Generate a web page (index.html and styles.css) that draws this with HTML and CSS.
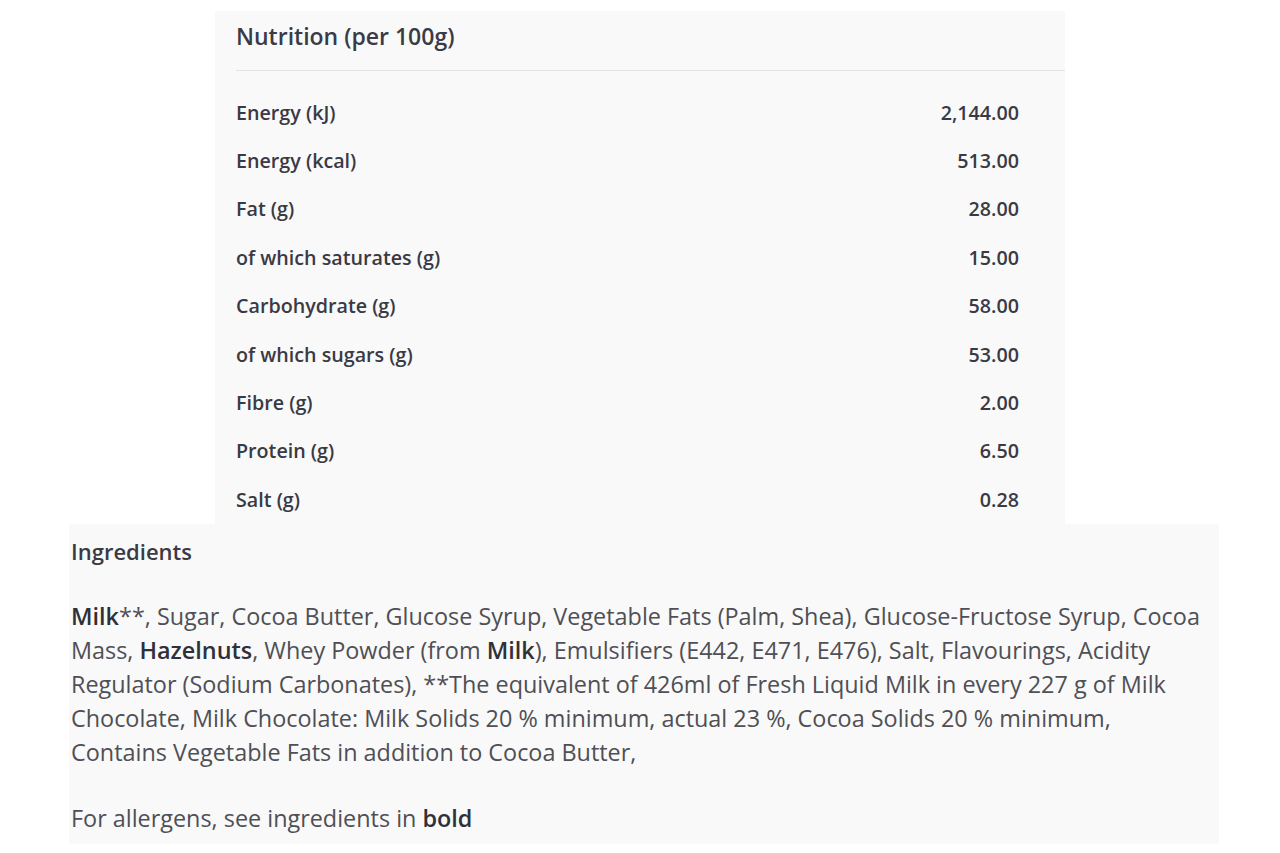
FILE: index.html
```html
<!DOCTYPE html>
<html lang="en">
<head>
<meta charset="utf-8">
<title>Nutrition</title>
<link rel="stylesheet" href="styles.css">
</head>
<body>
<section class="nutrition">
  <h2 class="nutrition-title">Nutrition (per 100g)</h2>
  <table class="nutrition-table">
    <tbody>
      <tr><th>Energy (kJ)</th><td>2,144.00</td></tr>
      <tr><th>Energy (kcal)</th><td>513.00</td></tr>
      <tr><th>Fat (g)</th><td>28.00</td></tr>
      <tr><th>of which saturates (g)</th><td>15.00</td></tr>
      <tr><th>Carbohydrate (g)</th><td>58.00</td></tr>
      <tr><th>of which sugars (g)</th><td>53.00</td></tr>
      <tr><th>Fibre (g)</th><td>2.00</td></tr>
      <tr><th>Protein (g)</th><td>6.50</td></tr>
      <tr><th>Salt (g)</th><td>0.28</td></tr>
    </tbody>
  </table>
</section>
<section class="ingredients">
  <h3 class="ingredients-title">Ingredients</h3>
  <p class="ingredients-text"><b>Milk</b>**, Sugar, Cocoa Butter, Glucose Syrup, Vegetable Fats (Palm, Shea), Glucose-Fructose Syrup, Cocoa Mass, <b>Hazelnuts</b>, Whey Powder (from <b>Milk</b>), Emulsifiers (E442, E471, E476), Salt, Flavourings, Acidity Regulator (Sodium Carbonates), **The equivalent of 426ml of Fresh Liquid Milk in every 227 g of Milk Chocolate, Milk Chocolate: Milk Solids 20 % minimum, actual 23 %, Cocoa Solids 20 % minimum, Contains Vegetable Fats in addition to Cocoa Butter,</p>
  <p class="ingredients-text">For allergens, see ingredients in <b>bold</b></p>
</section>
</body>
</html>
```
FILE: styles.css
```css
html, body {
  margin: 0;
  padding: 0;
  background: #ffffff;
}
body {
  font-family: "Open Sans", "Noto Sans", sans-serif;
  color: #4f4f55;
}
.nutrition {
  margin: 11px 0 0 215px;
  width: 850px;
  background: #f9f9f9;
  padding-left: 21px;
  box-sizing: border-box;
}
.nutrition-title {
  margin: 0;
  height: 60px;
  box-sizing: border-box;
  padding-top: 9px;
  font-size: 23px;
  line-height: 32px;
  font-weight: 600;
  color: #3a3b46;
  border-bottom: 1px solid #e2e2e2;
}
.nutrition-table {
  width: 100%;
  border-collapse: collapse;
  margin-top: 17px;
}
.nutrition-table th,
.nutrition-table td {
  padding: 0;
  height: 48.4px;
  font-size: 19.7px;
  font-weight: 600;
  color: #3a3a44;
  vertical-align: middle;
}
.nutrition-table th {
  text-align: left;
}
.nutrition-table td {
  text-align: right;
  padding-right: 46px;
}
.ingredients {
  margin-left: 69px;
  width: 1150px;
  background: #f9f9f9;
  padding: 12px 10px 9px 2px;
  box-sizing: border-box;
}
.ingredients-title {
  margin: 0;
  font-size: 22px;
  line-height: 30px;
  font-weight: 600;
  color: #3a3a44;
}
.ingredients-text {
  margin: 33px 0 0;
  font-size: 23.4px;
  line-height: 34px;
  color: #4f4f55;
}
.ingredients-text + .ingredients-text {
  margin-top: 32px;
}
.ingredients-text b {
  font-weight: 600;
  color: #303038;
}
```
